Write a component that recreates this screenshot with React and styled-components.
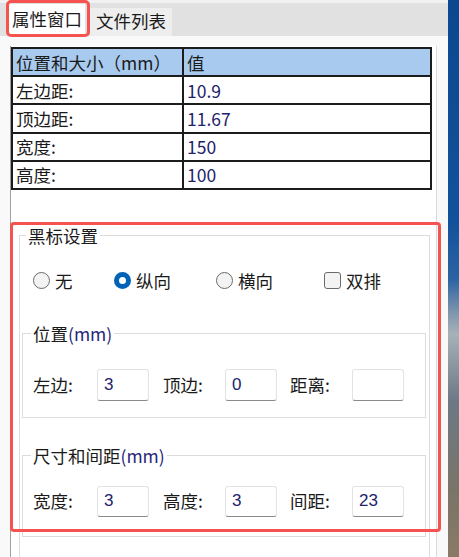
import React from 'react';
import styled, { createGlobalStyle } from 'styled-components';

const GlobalStyle = createGlobalStyle`
  html, body {
    margin: 0;
    padding: 0;
    background: #f0f0f0;
  }
  body {
    font-family: "Noto Sans CJK SC", "Noto Sans", "Liberation Sans", sans-serif;
    color: #1a1a1a;
  }
`;

const Window = styled.div`
  position: relative;
  display: flex;
  width: 459px;
  height: 557px;
  overflow: hidden;
`;

const Main = styled.div`
  display: flex;
  flex-direction: column;
  width: 448px;
  height: 100%;
  background: #f9f9f9;
  overflow: hidden;
`;

const Desktop = styled.div`
  flex: 1;
  background: linear-gradient(
    180deg,
    #0b4890 0%,
    #12529c 40%,
    #2a63a2 50%,
    #7d95ad 56%,
    #a7b1b8 60%,
    #6c7884 72%,
    #7a7468 88%,
    #8a7a66 100%
  );
`;

const TabBar = styled.div`
  display: flex;
  align-items: flex-end;
  gap: 5px;
  height: 36px;
  box-sizing: border-box;
  padding-left: 9px;
  background: #e1e1e1;
  border-top: 3px solid #f1f1f1;
`;

const Tab = styled.div`
  display: flex;
  align-items: center;
  height: ${p => (p.$active ? '32px' : '28px')};
  padding: ${p => (p.$active ? '0 3px 2px' : '0 6px 2px')};
  box-sizing: border-box;
  font-size: 17.5px;
  line-height: 20px;
  background: ${p => (p.$active ? '#ffffff' : '#eeeeee')};
`;

const Page = styled.div`
  flex: 1;
  display: flex;
  padding: 10px 11px 0 10px;
  min-height: 0;
`;

const Panel = styled.div`
  flex: 1;
  background: #ffffff;
  border-left: 1px solid #a0a0a0;
  border-right: 1px solid #dadada;
  overflow: hidden;
`;

const Table = styled.table`
  width: 421px;
  margin-top: 1px;
  border-collapse: collapse;
  font-size: 17.5px;
`;

const HeadCell = styled.th`
  height: 26.2px;
  padding: 0 0 0 3px;
  text-align: left;
  font-weight: normal;
  background: #a8caee;
  border: 2px solid #1c1c1c;
  width: ${p => p.$w || 'auto'};
`;

const Cell = styled.td`
  height: 26.2px;
  padding: 0 0 0 3px;
  border: 2px solid #1c1c1c;
  color: ${p => (p.$value ? '#23236a' : '#1a1a1a')};
`;

const Group = styled.fieldset`
  margin: ${p => p.$margin};
  padding: ${p => p.$padding};
  border: 1px solid #dcdcdc;
  min-width: 0;
`;

const Legend = styled.legend`
  padding: 0 2px;
  margin-left: ${p => p.$offset};
  font-size: 17.5px;
  line-height: 20px;
  color: #1a1a1a;
`;

const Unit = styled.span`
  color: #26267a;
`;

const OptionRow = styled.div`
  display: flex;
  align-items: center;
  height: 20px;
  padding-left: 11px;
`;

const Option = styled.label`
  display: flex;
  align-items: center;
  gap: 5px;
  width: ${p => p.$w};
  font-size: 17.5px;
  line-height: 20px;
`;

const Radio = styled.span`
  width: 17px;
  height: 17px;
  border-radius: 50%;
  box-sizing: border-box;
  border: ${p => (p.$checked ? '5px solid #0063b8' : '1px solid #6b6b6b')};
  background: ${p => (p.$checked ? '#ffffff' : '#f3f3f3')};
`;

const Check = styled.span`
  width: 17px;
  height: 17px;
  box-sizing: border-box;
  border: 1px solid #6b6b6b;
  border-radius: 3px;
  background: #f3f3f3;
`;

const FieldRow = styled.div`
  display: flex;
  align-items: center;
`;

const FieldLabel = styled.span`
  width: ${p => p.$w};
  padding-left: ${p => p.$pad || '0px'};
  box-sizing: border-box;
  font-size: 17.5px;
  line-height: 20px;
`;

const Input = styled.div`
  width: 52px;
  height: ${p => p.$h};
  box-sizing: border-box;
  padding-left: 6px;
  display: flex;
  align-items: center;
  background: #ffffff;
  border: 1px solid #e3e3e3;
  border-bottom: 1px solid #8a8a8a;
  border-radius: 3px;
  font-family: "Liberation Sans", "Noto Sans", sans-serif;
  font-size: 17px;
  color: #23236a;
`;

const TabMark = styled.div`
  position: absolute;
  left: 6px;
  top: 0;
  width: 84px;
  height: 37px;
  box-sizing: border-box;
  border: 3px solid #f4534f;
  border-radius: 5px;
  pointer-events: none;
`;

const SectionMark = styled.div`
  position: absolute;
  left: 10px;
  top: 222px;
  width: 431px;
  height: 310px;
  box-sizing: border-box;
  border: 3px solid #f4534f;
  border-radius: 4px;
  pointer-events: none;
`;

const rows = [
  ['左边距:', '10.9'],
  ['顶边距:', '11.67'],
  ['宽度:', '150'],
  ['高度:', '100'],
];

const Fields = ({ items, h }) => (
  <FieldRow>
    {items.map(([label, value], i) => (
      <React.Fragment key={label}>
        <FieldLabel $w={i === 0 ? '64px' : i === 1 ? '76px' : '75px'} $pad={i === 0 ? '0px' : i === 1 ? '14px' : '13px'}>
          {label}
        </FieldLabel>
        <Input $h={h}>{value}</Input>
      </React.Fragment>
    ))}
  </FieldRow>
);

export default function App() {
  return (
    <Window>
      <GlobalStyle />
      <Main>
        <TabBar>
          <Tab $active>属性窗口</Tab>
          <Tab>文件列表</Tab>
        </TabBar>
        <Page>
          <Panel>
            <Table>
              <thead>
                <tr>
                  <HeadCell $w="166px">位置和大小（mm）</HeadCell>
                  <HeadCell>值</HeadCell>
                </tr>
              </thead>
              <tbody>
                {rows.map(([k, v]) => (
                  <tr key={k}>
                    <Cell>{k}</Cell>
                    <Cell $value>{v}</Cell>
                  </tr>
                ))}
              </tbody>
            </Table>

            <Group $margin="36px 6px 0 8px" $padding="25px 3px 30px 2px">
              <Legend $offset="4px">黑标设置</Legend>
              <OptionRow>
                <Option $w="81px"><Radio />无</Option>
                <Option $w="102px"><Radio $checked />纵向</Option>
                <Option $w="108px"><Radio />横向</Option>
                <Option $w="80px"><Check />双排</Option>
              </OptionRow>

              <Group $margin="33px 0 0 0" $padding="25px 0 16px 10px">
                <Legend $offset="-2px">位置<Unit>(mm)</Unit></Legend>
                <Fields h="32px" items={[['左边:', '3'], ['顶边:', '0'], ['距离:', '']]} />
              </Group>

              <Group $margin="28px 0 0 0" $padding="20px 0 19px 10px">
                <Legend $offset="-2px">尺寸和间距<Unit>(mm)</Unit></Legend>
                <Fields h="31px" items={[['宽度:', '3'], ['高度:', '3'], ['间距:', '23']]} />
              </Group>
            </Group>
          </Panel>
        </Page>
      </Main>
      <Desktop />
      <TabMark />
      <SectionMark />
    </Window>
  );
}
